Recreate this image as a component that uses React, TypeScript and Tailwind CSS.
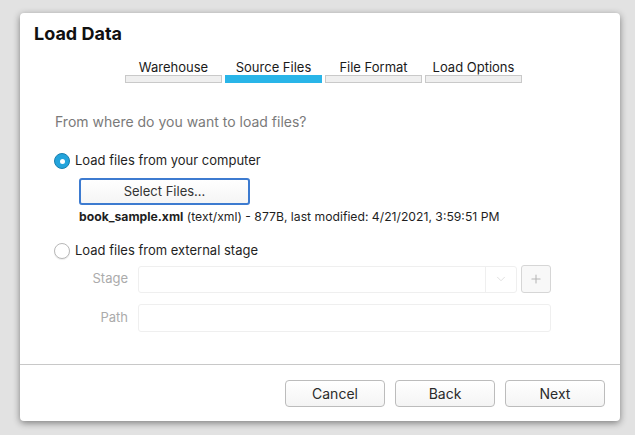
import { Plus, ChevronDown } from 'lucide-react'

const steps = [
  { label: 'Warehouse', active: false },
  { label: 'Source Files', active: true },
  { label: 'File Format', active: false },
  { label: 'Load Options', active: false },
]

function Radio({ checked }: { checked: boolean }) {
  if (checked) {
    return (
      <span className="w-4 h-4 rounded-full bg-[#23a4dc] border border-[#1a7fae] flex items-center justify-center shrink-0">
        <span className="w-[5px] h-[5px] rounded-full bg-white" />
      </span>
    )
  }
  return <span className="w-4 h-4 rounded-full bg-white border border-[#b8b8b8] shadow-[0_1px_1px_rgba(0,0,0,0.08)] shrink-0" />
}

function FooterButton({ children }: { children: React.ReactNode }) {
  return (
    <button className="w-[100px] h-[27px] rounded-[4px] border border-[#bcbcbc] bg-gradient-to-b from-white to-[#f4f4f4] text-[14px] text-[#2b2b2b]">
      {children}
    </button>
  )
}

export default function App() {
  return (
    <div
      className="w-[635px] h-[435px] bg-[#e2e2e2] pt-[13px] pl-[20px]"
      style={{ fontFamily: 'Inter, "Noto Sans", sans-serif' }}
    >
      <div className="w-[600px] h-[408px] bg-white rounded-[4px] shadow-[0_2px_7px_rgba(0,0,0,0.45)] flex flex-col">
        <div className="flex-1 flex flex-col">
          <h1 className="pt-[10px] pl-[14px] text-[18px] leading-[22px] font-bold text-[#111]">Load Data</h1>

          <div className="mt-[14px] ml-[105px] flex gap-[3px]">
            {steps.map((s) => (
              <div key={s.label} className="w-[97px] flex flex-col items-center">
                <span className="text-[13px] leading-[16px] text-[#1a1a1a]">{s.label}</span>
                <span
                  className={
                    s.active
                      ? 'w-full h-[8px] bg-[#29b5e8]'
                      : 'w-full h-[8px] bg-[#efefef] border border-[#c9c9c9]'
                  }
                />
              </div>
            ))}
          </div>

          <p className="mt-[29px] ml-[35px] text-[14px] leading-[20px] text-[#7a7a7a]">
            From where do you want to load files?
          </p>

          <label className="mt-[19px] ml-[34px] flex items-center gap-[5px] h-[20px]">
            <Radio checked />
            <span className="text-[13px] text-[#1f1f1f]">Load files from your computer</span>
          </label>

          <button className="mt-[7px] ml-[59px] w-[171px] h-[27px] rounded-[3px] border-2 border-[#3d7bd0] bg-gradient-to-b from-white to-[#f5f5f5] text-[13px] text-[#333]">
            Select Files...
          </button>

          <p className="mt-[4px] ml-[59px] text-[12.2px] leading-[16px] text-[#1f1f1f]">
            <span className="font-bold">book_sample.xml</span> (text/xml) - 877B, last modified: 4/21/2021, 3:59:51 PM
          </p>

          <label className="mt-[16px] ml-[34px] flex items-center gap-[5px] h-[20px]">
            <Radio checked={false} />
            <span className="text-[13px] text-[#1f1f1f]">Load files from external stage</span>
          </label>

          <div className="mt-[4px] flex items-center">
            <span className="w-[108px] text-right text-[13px] text-[#ababab]">Stage</span>
            <div className="ml-[10px] w-[379px] h-[27px] flex rounded-[3px] border border-[#efefef]">
              <div className="flex-1" />
              <div className="w-[31px] border-l border-[#efefef] flex items-center justify-center">
                <ChevronDown size={14} strokeWidth={1.5} className="text-[#dcdcdc]" />
              </div>
            </div>
            <div className="ml-[4px] w-[30px] h-[28px] rounded-[3px] border border-[#d6d6d6] bg-[#f8f8f8] flex items-center justify-center">
              <Plus size={14} strokeWidth={1.8} className="text-[#b5b5b5]" />
            </div>
          </div>

          <div className="mt-[11px] flex items-center">
            <span className="w-[108px] text-right text-[13px] text-[#ababab]">Path</span>
            <div className="ml-[10px] w-[413px] h-[28px] rounded-[3px] border border-[#efefef]" />
          </div>
        </div>

        <div className="border-t border-[#c8c8c8] pt-[15px] pb-[14px] pr-[15px] flex justify-end gap-[10px]">
          <FooterButton>Cancel</FooterButton>
          <FooterButton>Back</FooterButton>
          <FooterButton>Next</FooterButton>
        </div>
      </div>
    </div>
  )
}
